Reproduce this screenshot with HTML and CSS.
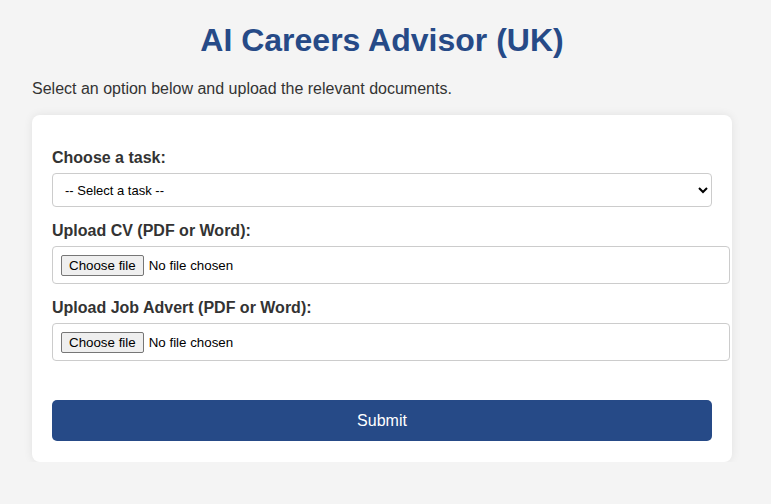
FILE: index.html
```html
<!DOCTYPE html>
<html lang="en">
<head>
<meta charset="utf-8">
<title>AI Careers Advisor (UK)</title>
<link rel="stylesheet" href="styles.css">
</head>
<body>
<div class="container">
  <h1 class="title">AI Careers Advisor (UK)</h1>
  <p class="intro">Select an option below and upload the relevant documents.</p>
  <form class="card">
    <label class="label" for="task">Choose a task:</label>
    <select class="select" id="task">
      <option>-- Select a task --</option>
    </select>
    <label class="label" for="cv">Upload CV (PDF or Word):</label>
    <label class="file">
      <span class="file-btn">Choose file</span>
      <span class="file-name">No file chosen</span>
      <input class="file-input" type="file" id="cv">
    </label>
    <label class="label" for="job">Upload Job Advert (PDF or Word):</label>
    <label class="file">
      <span class="file-btn">Choose file</span>
      <span class="file-name">No file chosen</span>
      <input class="file-input" type="file" id="job">
    </label>
    <button class="submit" type="button">Submit</button>
  </form>
</div>
</body>
</html>
```

FILE: styles.css
```css
html, body {
  margin: 0;
  padding: 0;
}
body {
  background: #f4f4f4;
  font-family: "Liberation Sans", Arial, sans-serif;
  color: #333;
}
.container {
  max-width: 700px;
  padding: 0 32px;
}
.title {
  margin: 20px 0 0;
  text-align: center;
  color: #264a87;
  font-size: 32px;
  line-height: 40px;
  font-weight: bold;
}
.intro {
  margin: 19px 0 0;
  font-size: 16px;
  line-height: 20px;
}
.card {
  margin-top: 16px;
  background: #fff;
  border-radius: 8px;
  box-shadow: 0 0 10px rgba(0, 0, 0, 0.08);
  padding: 19px 20px 21px;
  display: flex;
  flex-direction: column;
  align-items: flex-start;
}
.label {
  display: block;
  margin-top: 15px;
  margin-bottom: 6px;
  font-weight: bold;
  font-size: 16px;
  line-height: 18px;
  color: #333;
}
.select {
  width: 100%;
  box-sizing: border-box;
  height: 34px;
  padding: 0 8px;
  border: 1px solid #ccc;
  border-radius: 4px;
  background: #fff;
  font-family: "Liberation Sans", Arial, sans-serif;
  font-size: 13px;
  color: #000;
}
.file {
  box-sizing: border-box;
  width: 678px;
  height: 38px;
  padding: 0 8px;
  border: 1px solid #ccc;
  border-radius: 4px;
  display: flex;
  align-items: center;
  font-family: "Liberation Sans", Arial, sans-serif;
  font-size: 13.33px;
  color: #000;
  cursor: pointer;
}
.file-btn {
  box-sizing: border-box;
  height: 21px;
  padding: 0 7px;
  display: flex;
  align-items: center;
  background: #efefef;
  border: 1px solid #767676;
  border-radius: 2px;
  margin-right: 5px;
}
.file-input {
  display: none;
}
.submit {
  margin-top: 39px;
  width: 100%;
  height: 41px;
  background: #264a87;
  color: #fff;
  border: none;
  border-radius: 5px;
  font-family: "Liberation Sans", Arial, sans-serif;
  font-size: 16px;
}
```
